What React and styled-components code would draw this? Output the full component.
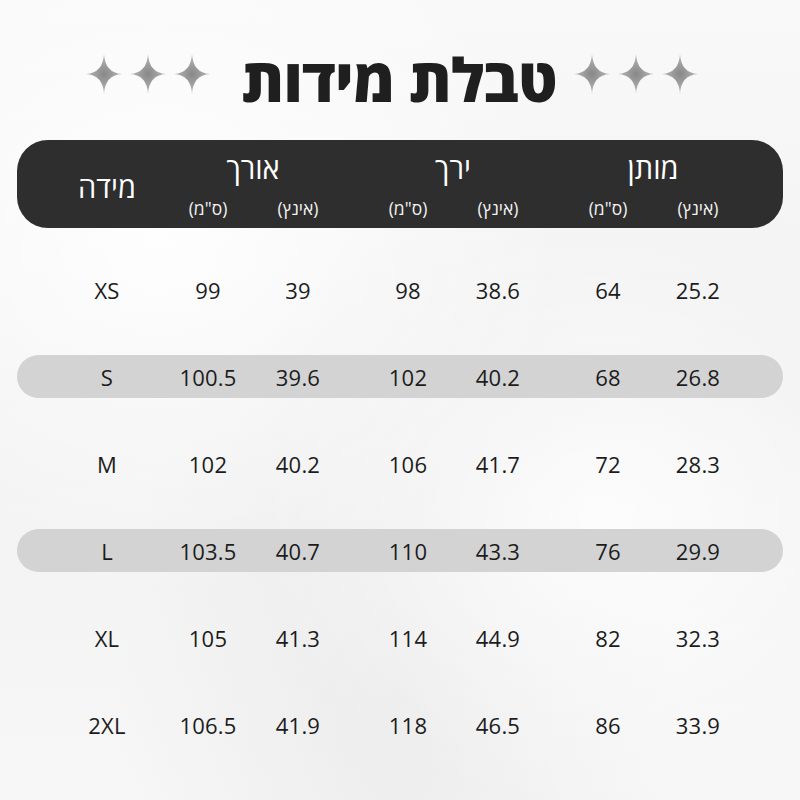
import styled, { createGlobalStyle } from "styled-components";

const GlobalStyle = createGlobalStyle`
  html, body {
    margin: 0;
    padding: 0;
  }
  body {
    width: 800px;
    height: 800px;
    overflow: hidden;
    font-family: "Open Sans", "DejaVu Sans", sans-serif;
    background: #f6f6f6;
  }
`;

const Page = styled.div`
  width: 800px;
  height: 800px;
  box-sizing: border-box;
  padding: 44px 17px 0;
  background:
    radial-gradient(ellipse at 20% 30%, rgba(255, 255, 255, 0.9), transparent 45%),
    radial-gradient(ellipse at 75% 65%, rgba(255, 255, 255, 0.8), transparent 40%),
    radial-gradient(ellipse at 50% 90%, rgba(230, 230, 230, 0.6), transparent 50%),
    linear-gradient(180deg, #f9f9f9 0%, #f1f1f1 50%, #f7f7f7 100%);
`;

const TitleRow = styled.div`
  display: flex;
  align-items: center;
  justify-content: center;
  height: 70px;
  margin-bottom: 26px;
  padding-right: 16px;
`;

const Sparkles = styled.div`
  display: flex;
  gap: 8px;
  margin-top: -10px;
`;

const Title = styled.h1`
  margin: 0 17px 0 32px;
  direction: rtl;
  font-size: 60px;
  font-weight: 800;
  color: #1f1f1f;
  line-height: 1;
  letter-spacing: -0.5px;
`;

/* size column + three measurement groups, each with two sub-columns */
const Grid = styled.div`
  display: grid;
  grid-template-columns: 86px repeat(3, 180px);
  column-gap: 20px;
  padding: 0 0 0 40px;
`;

const HeaderBar = styled(Grid)`
  height: 88px;
  box-sizing: border-box;
  border-radius: 31px;
  background: #2e2e2e;
  color: #fff;
  align-items: stretch;
`;

const SizeLabel = styled.div`
  align-self: center;
  direction: rtl;
  text-align: center;
  padding: 4px 0 0 14px;
  font-size: 29px;
`;

const Group = styled.div`
  display: grid;
  grid-template-columns: 90px 90px;
  grid-template-rows: 50px 32px;
  padding-top: 4px;
`;

const GroupLabel = styled.div`
  grid-column: 1 / span 2;
  direction: rtl;
  text-align: center;
  font-size: 29px;
  line-height: 48px;
`;

const UnitLabel = styled.div`
  direction: rtl;
  text-align: center;
  font-size: 17.5px;
  line-height: 28px;
  color: #f2f2f2;
`;

const Rows = styled.div`
  display: flex;
  flex-direction: column;
  gap: 44px;
  margin-top: 40px;
`;

const Row = styled(Grid)`
  align-items: center;
  height: 43px;
  border-radius: 22px;
  background: ${(p) => (p.$shaded ? "#d3d3d3" : "transparent")};
`;

const Pair = styled.div`
  display: grid;
  grid-template-columns: 90px 90px;
`;

const Cell = styled.div`
  text-align: center;
  font-size: 22px;
  color: #1c1c1c;
  letter-spacing: 0.2px;
  padding-left: ${(p) => (p.$size ? "14px" : "0")};
`;

const Sparkle = () => (
  <svg width="36" height="40" viewBox="0 0 36 40">
    <defs>
      <radialGradient id="sg" cx="50%" cy="50%" r="50%">
        <stop offset="0%" stopColor="#888" />
        <stop offset="100%" stopColor="#b8b8b8" />
      </radialGradient>
    </defs>
    <path
      d="M18 0 Q19 18.8 36 20 Q19 21.2 18 40 Q17 21.2 0 20 Q17 18.8 18 0 Z"
      fill="url(#sg)"
    />
  </svg>
);

const SparkleGroup = () => (
  <Sparkles>
    <Sparkle />
    <Sparkle />
    <Sparkle />
  </Sparkles>
);

const data = [
  ["XS", "99", "39", "98", "38.6", "64", "25.2"],
  ["S", "100.5", "39.6", "102", "40.2", "68", "26.8"],
  ["M", "102", "40.2", "106", "41.7", "72", "28.3"],
  ["L", "103.5", "40.7", "110", "43.3", "76", "29.9"],
  ["XL", "105", "41.3", "114", "44.9", "82", "32.3"],
  ["2XL", "106.5", "41.9", "118", "46.5", "86", "33.9"],
];

const groups = ["אורך", "ירך", "מותן"];

export default function App() {
  return (
    <>
      <GlobalStyle />
      <Page>
        <TitleRow>
          <SparkleGroup />
          <Title>טבלת מידות</Title>
          <SparkleGroup />
        </TitleRow>

        <HeaderBar>
          <SizeLabel>מידה</SizeLabel>
          {groups.map((g) => (
            <Group key={g}>
              <GroupLabel>{g}</GroupLabel>
              <UnitLabel>(ס"מ)</UnitLabel>
              <UnitLabel>(אינץ)</UnitLabel>
            </Group>
          ))}
        </HeaderBar>

        <Rows>
          {data.map(([size, ...vals], i) => (
            <Row key={size} $shaded={i === 1 || i === 3}>
              <Cell $size>{size}</Cell>
              {[0, 2, 4].map((k) => (
                <Pair key={k}>
                  <Cell>{vals[k]}</Cell>
                  <Cell>{vals[k + 1]}</Cell>
                </Pair>
              ))}
            </Row>
          ))}
        </Rows>
      </Page>
    </>
  );
}
